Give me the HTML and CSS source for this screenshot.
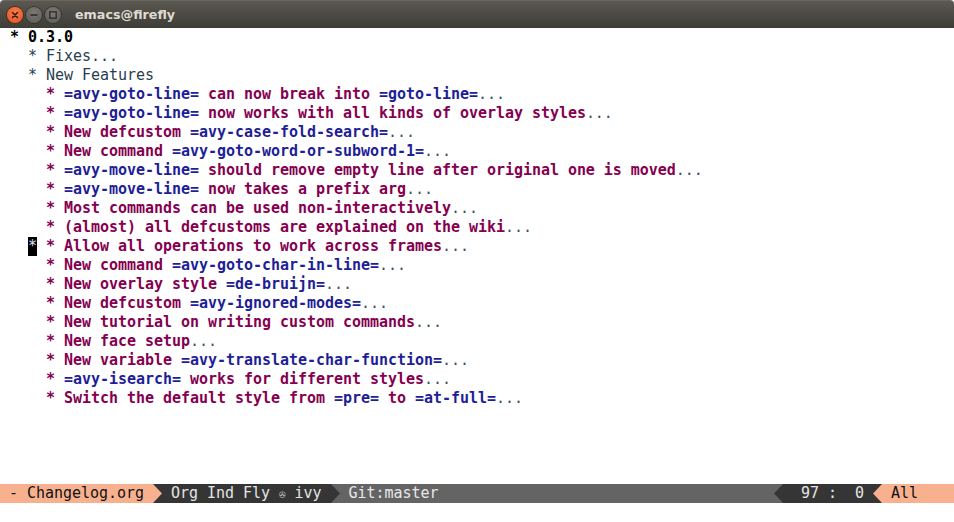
FILE: index.html
```html
<!DOCTYPE html>
<html>
<head>
<meta charset="utf-8">
<title>emacs@firefly</title>
<link rel="stylesheet" href="styles.css">
</head>
<body>
<div class="window">
  <div class="titlebar">
    <div class="buttons">
      <span class="btn close"><svg width="16" height="16" viewBox="0 0 16 16"><path d="M5.5 5.5 L10.5 10.5 M10.5 5.5 L5.5 10.5" stroke="#3a1a10" stroke-width="1.6" stroke-linecap="round"/></svg></span>
      <span class="btn"><svg width="16" height="16" viewBox="0 0 16 16"><path d="M4.5 8 H11.5" stroke="#2c2b28" stroke-width="1.6"/></svg></span>
      <span class="btn"><svg width="16" height="16" viewBox="0 0 16 16"><rect x="4.8" y="4.8" width="6.4" height="6.4" fill="none" stroke="#2c2b28" stroke-width="1.3"/></svg></span>
    </div>
    <div class="title">emacs@firefly</div>
  </div>
  <div class="editor">
<div class="line l1">* 0.3.0</div>
<div class="line l2">  * Fixes...</div>
<div class="line l2">  * New Features</div>
<div class="line l3">    * <span class="v">=avy-goto-line=</span> can now break into <span class="v">=goto-line=</span><span class="e">...</span></div>
<div class="line l3">    * <span class="v">=avy-goto-line=</span> now works with all kinds of overlay styles<span class="e">...</span></div>
<div class="line l3">    * New defcustom <span class="v">=avy-case-fold-search=</span><span class="e">...</span></div>
<div class="line l3">    * New command <span class="v">=avy-goto-word-or-subword-1=</span><span class="e">...</span></div>
<div class="line l3">    * <span class="v">=avy-move-line=</span> should remove empty line after original one is moved<span class="e">...</span></div>
<div class="line l3">    * <span class="v">=avy-move-line=</span> now takes a prefix arg<span class="e">...</span></div>
<div class="line l3">    * Most commands can be used non-interactively<span class="e">...</span></div>
<div class="line l3">    * (almost) all defcustoms are explained on the wiki<span class="e">...</span></div>
<div class="line l3">  <span class="cursor">*</span> * Allow all operations to work across frames<span class="e">...</span></div>
<div class="line l3">    * New command <span class="v">=avy-goto-char-in-line=</span><span class="e">...</span></div>
<div class="line l3">    * New overlay style <span class="v">=de-bruijn=</span><span class="e">...</span></div>
<div class="line l3">    * New defcustom <span class="v">=avy-ignored-modes=</span><span class="e">...</span></div>
<div class="line l3">    * New tutorial on writing custom commands<span class="e">...</span></div>
<div class="line l3">    * New face setup<span class="e">...</span></div>
<div class="line l3">    * New variable <span class="v">=avy-translate-char-function=</span><span class="e">...</span></div>
<div class="line l3">    * <span class="v">=avy-isearch=</span> works for different styles<span class="e">...</span></div>
<div class="line l3">    * Switch the default style from <span class="v">=pre=</span> to <span class="v">=at-full=</span><span class="e">...</span></div>
  </div>
  <div class="modeline">
    <span class="seg peach"> - Changelog.org </span>
    <svg class="arrow" width="9" height="19" viewBox="0 0 9 19"><rect width="9" height="19" fill="#353535"/><polygon points="0,0 9,9.5 0,19" fill="#f8b18f"/></svg>
    <span class="seg dark"> Org Ind Fly <span class="glyph">✇</span> ivy </span>
    <svg class="arrow" width="9" height="19" viewBox="0 0 9 19"><rect width="9" height="19" fill="#646464"/><polygon points="0,0 9,9.5 0,19" fill="#353535"/></svg>
    <span class="seg grey fill"> Git:master</span>
    <svg class="arrow" width="9" height="19" viewBox="0 0 9 19"><rect width="9" height="19" fill="#646464"/><polygon points="9,0 0,9.5 9,19" fill="#353535"/></svg>
    <span class="seg dark">  97 :  0 </span>
    <svg class="arrow" width="9" height="19" viewBox="0 0 9 19"><rect width="9" height="19" fill="#353535"/><polygon points="9,0 0,9.5 9,19" fill="#f8b18f"/></svg>
    <span class="seg peach end"> All</span>
  </div>
  <div class="echo"></div>
</div>
</body>
</html>
```

FILE: styles.css
```css
html, body {
  margin: 0;
  padding: 0;
  background: #ffffff;
}
.window {
  width: 954px;
  height: 522px;
  display: flex;
  flex-direction: column;
  overflow: hidden;
}
.titlebar {
  height: 28px;
  flex: none;
  display: flex;
  align-items: center;
  background: linear-gradient(#5b5851, #3d3c37);
  border-top: 1px solid #6a675f;
  box-sizing: border-box;
  border-radius: 4px 4px 0 0;
}
.buttons {
  display: flex;
  gap: 3px;
  padding-left: 7px;
}
.btn {
  width: 16px;
  height: 16px;
  border-radius: 50%;
  background: radial-gradient(circle at 50% 35%, #7c7a74, #5a5954);
  box-shadow: 0 0 0 1px #34332f;
  display: flex;
}
.btn.close {
  background: radial-gradient(circle at 50% 35%, #f6804f, #e2501f);
  box-shadow: 0 0 0 1px #5a2a18;
}
.title {
  margin-left: 14px;
  font-family: "DejaVu Sans", sans-serif;
  font-weight: bold;
  font-size: 12.7px;
  color: #dfdbd2;
}
.editor {
  flex: 1;
  padding-left: 10px;
  font-family: "DejaVu Sans Mono", monospace;
  font-size: 15px;
  line-height: 19px;
  letter-spacing: -0.033px;
}
.line {
  white-space: pre;
  height: 19px;
}
.l1 {
  color: #000000;
  font-weight: bold;
}
.l2 {
  color: #2a3d4e;
}
.l3 {
  color: #850050;
  font-weight: bold;
}
.v {
  color: #1e1e96;
}
.e {
  color: #3e4e5e;
  font-weight: normal;
}
.cursor {
  display: inline-block;
  width: 9px;
  background: #000000;
  color: #cfe3ff;
  font-weight: normal;
}
.modeline {
  height: 19px;
  flex: none;
  display: flex;
  font-family: "DejaVu Sans Mono", monospace;
  font-size: 15px;
  line-height: 19px;
  letter-spacing: -0.033px;
}
.seg {
  white-space: pre;
  height: 19px;
}
.arrow {
  flex: none;
  display: block;
}
.peach {
  background: #f8b18f;
  color: #111111;
}
.dark {
  background: #353535;
  color: #e4e4e4;
}
.grey {
  background: #646464;
  color: #e8e8e8;
}
.fill {
  flex: 1;
}
.end {
  width: 72px;
}
.glyph {
  font-size: 11px;
  color: #cfcfcf;
}
.echo {
  height: 19px;
  flex: none;
}
```
